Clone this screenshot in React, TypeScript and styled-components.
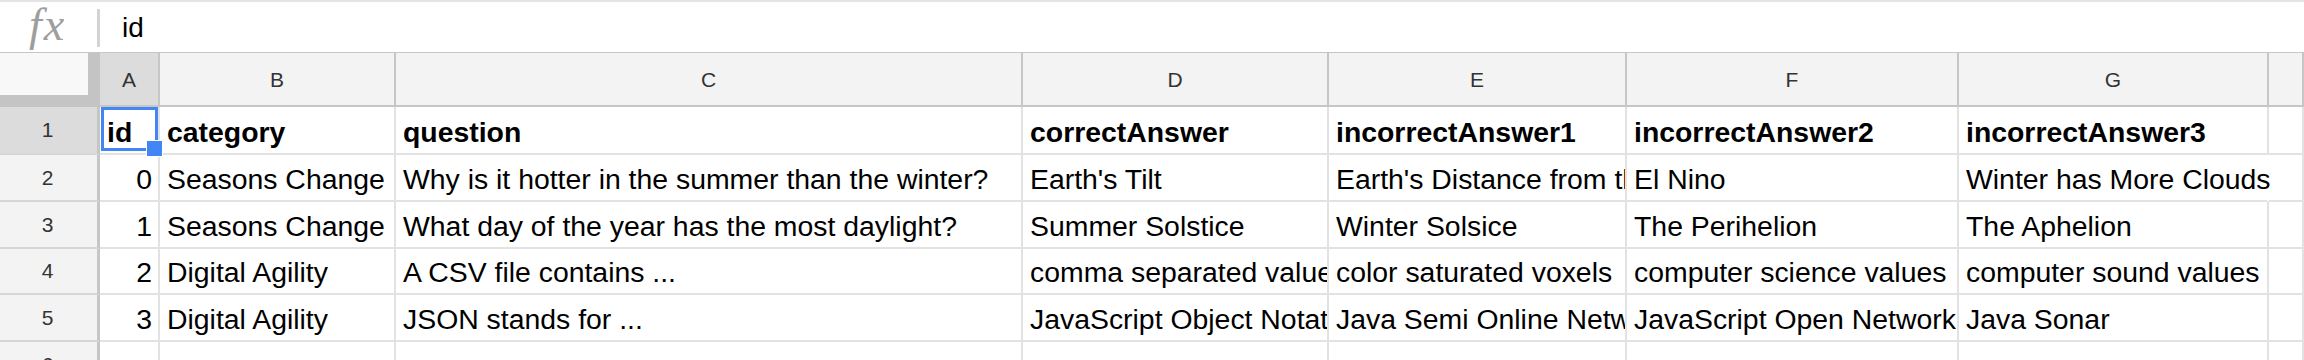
import { FC } from 'react'
import styled, { createGlobalStyle, css } from 'styled-components'

const colors = {
  white: '#ffffff',
  black: '#000000',
  grid: '#e2e2e2',
  headerLine: '#c6c6c6',
  rowLine: '#d6d6d6',
  headerBg: '#f3f3f3',
  headerActive: '#dcdcdc',
  corner: '#f8f8f8',
  frozen: '#c4c4c4',
  headerText: '#333333',
  fx: '#9e9e9e',
  blue: '#4285f4',
}

const GlobalStyle = createGlobalStyle`
  html, body {
    margin: 0;
    padding: 0;
    background: ${colors.white};
    overflow: hidden;
  }
  * {
    box-sizing: border-box;
  }
`

const StyledRoot = styled.div`
  width: 2304px;
  height: 360px;
  overflow: hidden;
  font-family: 'Liberation Sans', Arial, sans-serif;
  color: ${colors.black};
`

const StyledFormulaBar = styled.div`
  display: flex;
  align-items: center;
  height: 53px;
  border-top: 2px solid #e4e4e4;
  border-bottom: 1px solid ${colors.headerLine};
`

const StyledFx = styled.div`
  width: 97px;
  height: 50px;
  padding-left: 29px;
  font-family: 'Liberation Serif', 'Times New Roman', serif;
  font-style: italic;
  font-size: 46px;
  letter-spacing: 2px;
  color: ${colors.fx};
  line-height: 46px;
`

const StyledDivider = styled.div`
  width: 3px;
  height: 38px;
  margin-top: 2px;
  background: #d3d3d3;
`

const StyledFormulaText = styled.div`
  padding-left: 22px;
  font-size: 28px;
  margin-top: 2px;
`

const StyledSheet = styled.div<{ $columns: number[] }>`
  display: grid;
  grid-template-columns: 100px ${({ $columns }) => $columns.map((w) => `${w}px`).join(' ')} 1fr;
  grid-template-rows: 54px 48px 47px 47px 46px 47px 47px;
`

const StyledCorner = styled.div`
  background: ${colors.corner};
  border-right: 12px solid ${colors.frozen};
  border-bottom: 12px solid ${colors.frozen};
`

const StyledColHeader = styled.div<{ $active?: boolean }>`
  display: flex;
  align-items: center;
  justify-content: center;
  background: ${({ $active }) => ($active ? colors.headerActive : colors.headerBg)};
  border-right: 2px solid ${colors.headerLine};
  border-bottom: 2px solid ${colors.headerLine};
  font-size: 21px;
  color: ${colors.headerText};
  padding-top: 1px;
`

const StyledRowHeader = styled.div<{ $active?: boolean }>`
  display: flex;
  align-items: center;
  justify-content: center;
  background: ${({ $active }) => ($active ? colors.headerActive : colors.headerBg)};
  border-right: 3px solid ${colors.headerLine};
  border-bottom: 2px solid ${colors.rowLine};
  font-size: 21px;
  color: ${colors.headerText};
  padding-right: 2px;
`

const StyledCell = styled.div<{
  $bold?: boolean
  $numeric?: boolean
  $spill?: boolean
  $selected?: boolean
}>`
  display: flex;
  align-items: flex-end;
  justify-content: ${({ $numeric }) => ($numeric ? 'flex-end' : 'flex-start')};
  min-width: 0;
  padding: 0 ${({ $numeric }) => ($numeric ? '6px' : '7px')} 4px 7px;
  border-right: 2px solid ${colors.grid};
  border-bottom: 2px solid ${colors.grid};
  font-size: 28.4px;
  font-weight: ${({ $bold }) => ($bold ? 700 : 400)};
  white-space: nowrap;
  overflow: hidden;

  ${({ $spill }) =>
    $spill &&
    css`
      overflow: visible;
      border-right-color: transparent;
    `}

  ${({ $selected }) =>
    $selected &&
    css`
      position: relative;
      overflow: visible;

      &::after {
        content: '';
        position: absolute;
        top: 0;
        left: 1px;
        right: 0;
        bottom: 2px;
        border: 3px solid ${colors.blue};
      }

      &::before {
        content: '';
        position: absolute;
        right: -5px;
        bottom: -4px;
        width: 15px;
        height: 15px;
        background: ${colors.blue};
        border: 1px solid ${colors.white};
        z-index: 1;
      }
    `}
`

interface IColumn {
  label: string
  width: number
}

const columns: IColumn[] = [
  { label: 'A', width: 60 },
  { label: 'B', width: 236 },
  { label: 'C', width: 627 },
  { label: 'D', width: 306 },
  { label: 'E', width: 298 },
  { label: 'F', width: 332 },
  { label: 'G', width: 310 },
]

const rows: (string | number)[][] = [
  ['id', 'category', 'question', 'correctAnswer', 'incorrectAnswer1', 'incorrectAnswer2', 'incorrectAnswer3'],
  [0, 'Seasons Change', 'Why is it hotter in the summer than the winter?', "Earth's Tilt", "Earth's Distance from the Sun", 'El Nino', 'Winter has More Clouds'],
  [1, 'Seasons Change', 'What day of the year has the most daylight?', 'Summer Solstice', 'Winter Solsice', 'The Perihelion', 'The Aphelion'],
  [2, 'Digital Agility', 'A CSV file contains ...', 'comma separated values', 'color saturated voxels', 'computer science values', 'computer sound values'],
  [3, 'Digital Agility', 'JSON stands for ...', 'JavaScript Object Notation', 'Java Semi Online Network', 'JavaScript Open Network', 'Java Sonar'],
  [],
]

const isEmpty = (row: (string | number)[], index: number) =>
  row[index] === undefined || row[index] === ''

export const Sheet: FC = () => (
  <StyledSheet $columns={columns.map((c) => c.width)}>
    <StyledCorner />
    {columns.map((c, i) => (
      <StyledColHeader key={c.label} $active={i === 0}>
        {c.label}
      </StyledColHeader>
    ))}
    <StyledColHeader />

    {rows.map((row, r) => (
      <Row key={r} row={row} index={r} />
    ))}
  </StyledSheet>
)

const Row: FC<{ row: (string | number)[]; index: number }> = ({ row, index }) => (
  <>
    <StyledRowHeader $active={index === 0}>{index + 1}</StyledRowHeader>
    {columns.map((c, i) => {
      const value = row[i]
      return (
        <StyledCell
          key={c.label}
          $bold={index === 0}
          $numeric={typeof value === 'number'}
          $selected={index === 0 && i === 0}
          $spill={i === columns.length - 1 && index === 1 && isEmpty(row, i + 1)}
        >
          {value}
        </StyledCell>
      )
    })}
    <StyledCell />
  </>
)

const App: FC = () => (
  <>
    <GlobalStyle />
    <StyledRoot>
      <StyledFormulaBar>
        <StyledFx>fx</StyledFx>
        <StyledDivider />
        <StyledFormulaText>id</StyledFormulaText>
      </StyledFormulaBar>
      <Sheet />
    </StyledRoot>
  </>
)

export default App
